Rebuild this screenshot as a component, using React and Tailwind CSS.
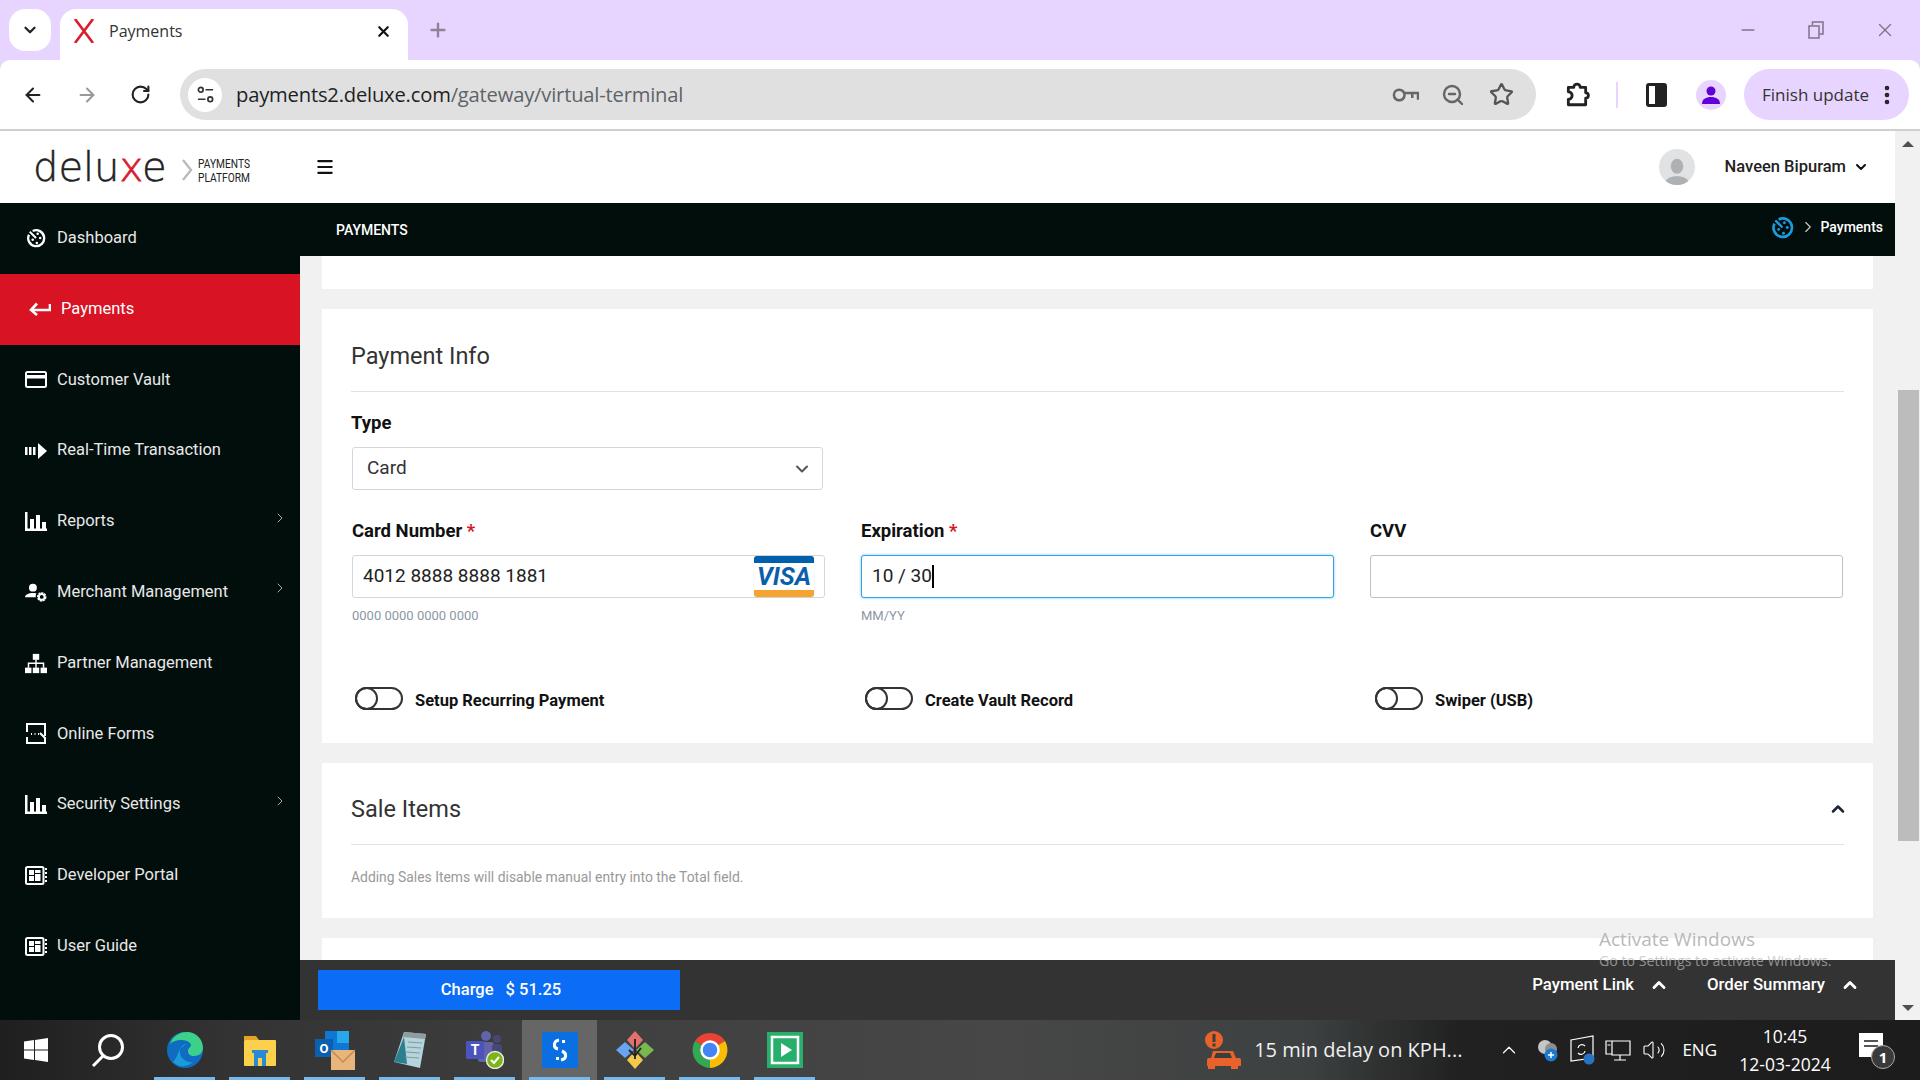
import React from 'react';
import { ArrowLeft, ArrowRight, RotateCw, ChevronDown, ChevronRight, ChevronUp, X, Plus, Minus, Star, ZoomOut, EllipsisVertical, Menu, Volume2 } from 'lucide-react';

function Gauge({ className }) {
    return (
        <svg viewBox="0 0 24 24" className={className} fill="none" stroke="currentColor">
            <path d="M8 3.6A9.6 9.6 0 1 1 3.6 8" strokeWidth="2.8" />
            <path d="M4.5 4.5L12 12" strokeWidth="2.4" />
            <circle cx="8" cy="14" r="1.5" fill="currentColor" stroke="none" />
            <circle cx="13" cy="18" r="1.5" fill="currentColor" stroke="none" />
            <circle cx="17" cy="12" r="1.5" fill="currentColor" stroke="none" />
            <circle cx="14" cy="7" r="1.5" fill="currentColor" stroke="none" />
        </svg>
    );
}

function ReturnArrow() {
    return (
        <svg viewBox="0 0 22 14" className="w-[22px] h-[14px]" fill="none" stroke="white">
            <path d="M21 2v6H3" strokeWidth="2.6" />
            <path d="M8 1.5L2 8l6 5" strokeWidth="2.6" />
        </svg>
    );
}

function CardIcon() {
    return (
        <svg viewBox="0 0 22 17" className="w-[22px] h-[17px]" fill="none">
            <rect x="1" y="1" width="20" height="15" rx="1.5" stroke="white" strokeWidth="2" />
            <rect x="1" y="4" width="20" height="3.5" fill="white" />
        </svg>
    );
}

function RealTime() {
    return (
        <svg viewBox="0 0 22 16" className="w-[22px] h-[16px]" fill="white">
            <rect x="0" y="4" width="2.5" height="8" />
            <rect x="4" y="4" width="2.5" height="8" />
            <rect x="8" y="4" width="2.5" height="8" />
            <path d="M13 0l9 8-9 8z" />
        </svg>
    );
}

function Bars() {
    return (
        <svg viewBox="0 0 22 19" className="w-[22px] h-[19px]" fill="white">
            <rect x="0" y="0" width="2.5" height="19" />
            <rect x="0" y="16.5" width="22" height="2.5" />
            <rect x="5" y="7" width="4" height="11" />
            <rect x="11" y="3" width="4" height="15" />
            <rect x="17" y="10" width="4" height="8" />
        </svg>
    );
}

function UserGear() {
    return (
        <svg viewBox="0 0 25 21" className="w-[25px] h-[21px]" fill="white">
            <circle cx="9" cy="5" r="4.5" />
            <path d="M0 16c0-3 4-5 9-5 1.5 0 3 .2 4 .5-1 1.5-1 3.5-.5 4.5z" />
            <circle cx="19" cy="15.5" r="4.3" fill="none" stroke="white" strokeWidth="2.2" strokeDasharray="2.4 .8" />
            <circle cx="19" cy="15.5" r="3.2" fill="none" stroke="white" strokeWidth="2" />
        </svg>
    );
}

function Sitemap() {
    return (
        <svg viewBox="0 0 24 21" className="w-[24px] h-[21px]" fill="white">
            <rect x="8.5" y="0" width="7" height="6.5" />
            <rect x="0" y="15" width="7" height="6" />
            <rect x="8.5" y="15" width="7" height="6" />
            <rect x="17" y="15" width="7" height="6" />
            <path d="M11.2 6h1.600v3.500H21V15h-1.600v-4h-6.600v4h-1.600v-4H4.600v4H3V9.500h8.200z" />
        </svg>
    );
}

function FormIcon() {
    return (
        <svg viewBox="0 0 20 21" className="w-[20px] h-[21px]" fill="none" stroke="white" strokeWidth="2">
            <path d="M1 9V1h18v12M1 14v6h18v-5L14 10" />
            <path d="M5 11h1M8.5 11h1M12 11h1" strokeWidth="2" />
        </svg>
    );
}

function GridBox() {
    return (
        <svg viewBox="0 0 22 19" className="w-[22px] h-[19px]" fill="none">
            <rect x="1" y="1" width="17.5" height="17" rx="1.5" stroke="white" strokeWidth="2" />
            <rect x="4" y="4" width="5" height="5" fill="white" />
            <rect x="10" y="4" width="5.5" height="3" fill="white" />
            <rect x="4" y="10" width="5" height="5" fill="white" />
            <rect x="10" y="8" width="5.5" height="7" fill="white" />
            <path d="M20 3h2M20 7h2M20 11h2M20 15h2" stroke="white" strokeWidth="2" />
        </svg>
    );
}

const menu = [
    { label: 'Dashboard', icon: <Gauge className="w-[20px] h-[20px] text-white" /> },
    { label: 'Payments', icon: <ReturnArrow />, active: true },
    { label: 'Customer Vault', icon: <CardIcon /> },
    { label: 'Real-Time Transaction', icon: <RealTime /> },
    { label: 'Reports', icon: <Bars />, more: true },
    { label: 'Merchant Management', icon: <UserGear />, more: true },
    { label: 'Partner Management', icon: <Sitemap /> },
    { label: 'Online Forms', icon: <FormIcon /> },
    { label: 'Security Settings', icon: <Bars />, more: true },
    { label: 'Developer Portal', icon: <GridBox /> },
    { label: 'User Guide', icon: <GridBox /> },
];

function TabBar() {
    return (
        <div className="h-[60px] bg-[#e8d5ff] flex pl-[9px] pt-[9px] shrink-0">
            <div className="w-[42px] h-[42px] rounded-[16px] bg-white flex items-center justify-center">
                <ChevronDown className="w-[18px] h-[18px] text-[#222]" strokeWidth={3} />
            </div>
            <div className="ml-[9px] w-[348px] h-[51px] bg-white rounded-t-[16px] flex items-center pl-[12px] pr-[16px] pb-[7px]">
                <svg viewBox="0 0 24 24" className="w-[24px] h-[24px] shrink-0" fill="none" stroke="#d81e2c" strokeWidth="2.6">
                    <path d="M3 0l18 24M21 0L3 24" />
                </svg>
                <span className="ml-[13px] text-[16px] text-[#333] font-['Open_Sans',sans-serif] flex-1">Payments</span>
                <X className="w-[17px] h-[17px] text-[#111]" strokeWidth={3} />
            </div>
            <div className="ml-[19px] h-[42px] flex items-center">
                <Plus className="w-[22px] h-[22px] text-[#8f8399]" strokeWidth={2.6} />
            </div>
            <div className="flex-1" />
            <div className="h-[42px] flex items-center text-[#7f7389]">
                <Minus className="w-[20px] h-[20px]" strokeWidth={1.8} />
                <svg viewBox="0 0 16 18" className="ml-[50px] w-[16px] h-[18px]" fill="none" stroke="currentColor" strokeWidth="1.5">
                    <rect x="1" y="5" width="10" height="12" />
                    <path d="M4.5 4V1H15v12h-3.5" />
                </svg>
                <X className="ml-[50px] mr-[24px] w-[22px] h-[22px]" strokeWidth={1.5} />
            </div>
        </div>
    );
}

function ToolBar() {
    return (
        <div className="bg-[#e8d5ff] shrink-0">
            <div className="h-[69px] bg-white rounded-t-[10px] flex items-center pl-[22px] font-['Open_Sans',sans-serif]">
                <ArrowLeft className="w-[22px] h-[22px] text-[#222]" strokeWidth={2.2} />
                <ArrowRight className="ml-[32px] w-[22px] h-[22px] text-[#999]" strokeWidth={2.2} />
                <RotateCw className="ml-[32px] w-[21px] h-[21px] text-[#222]" strokeWidth={2.4} />
                <div className="ml-[29px] w-[1356px] h-[51px] rounded-full bg-[#e0e0e0] flex items-center pl-[8px] pr-[22px]">
                    <div className="w-[34px] h-[34px] rounded-full bg-white flex items-center justify-center">
                        <svg viewBox="0 0 20 20" className="w-[19px] h-[19px]" fill="none" stroke="#333" strokeWidth="1.8">
                            <circle cx="5" cy="5" r="2.5" />
                            <path d="M10 5h8M2 15h8" />
                            <circle cx="15" cy="15" r="2.5" />
                        </svg>
                    </div>
                    <div className="ml-[14px] flex-1 text-[20.2px] tracking-[-0.2px] text-[#1f1f1f]">
                        payments2.deluxe.com<span className="text-[#5f6368]">/gateway/virtual-terminal</span>
                    </div>
                    <svg viewBox="0 0 28 18" className="w-[27px] h-[18px]" fill="none" stroke="#666" strokeWidth="2.6">
                        <circle cx="7.5" cy="9" r="5.5" />
                        <path d="M13 7h14v7M21 7v5" />
                    </svg>
                    <ZoomOut className="ml-[22px] w-[24px] h-[24px] text-[#666]" strokeWidth={2.4} />
                    <Star className="ml-[24px] w-[25px] h-[25px] text-[#555]" strokeWidth={2.2} />
                </div>
                <svg viewBox="0 0 24 24" className="ml-[28px] w-[26px] h-[26px]" fill="none" stroke="#222" strokeWidth="2.6">
                    <path d="M4 5h5a3 3 0 0 1 6 0h5v5a2.5 2.5 0 0 1 0 5v6H4v-5a3.5 3.5 0 0 0 0-7z" strokeLinejoin="round" />
                </svg>
                <div className="ml-[26px] w-[2px] h-[26px] bg-[#e8d5ff]" />
                <div className="ml-[28px] w-[21px] h-[24px] rounded-[3px] border-[3px] border-[#222] flex justify-end">
                    <div className="w-[9px] bg-[#222]" />
                </div>
                <div className="ml-[29px] w-[30px] h-[30px] rounded-full bg-[#e8d5ff] flex items-center justify-center">
                    <svg viewBox="0 0 20 20" className="w-[20px] h-[20px]" fill="#6200d8">
                        <circle cx="10" cy="6" r="4.5" />
                        <path d="M1 19c0-5 4-7 9-7s9 2 9 7z" />
                    </svg>
                </div>
                <div className="ml-[18px] w-[165px] h-[51px] rounded-full bg-[#e8d5ff] flex items-center pl-[18px]">
                    <span className="text-[17px] text-[#333] whitespace-nowrap">Finish update</span>
                    <EllipsisVertical className="ml-[6px] w-[24px] h-[24px] text-[#222]" strokeWidth={2.6} />
                </div>
            </div>
            <div className="h-[2px] bg-[#cfcfcf]" />
        </div>
    );
}

function Logo() {
    return (
        <div className="flex items-center">
            <div className="w-[149px] text-[40px] leading-none text-[#222] font-['DejaVu_Sans',sans-serif] font-extralight [-webkit-text-stroke:0.5px_#222]">
                delu<span className="text-[#d81e2c] [-webkit-text-stroke:0.8px_#d81e2c]">x</span>e
            </div>
            <svg viewBox="0 0 11 22" className="w-[11px] h-[22px] mt-[6px]" fill="none" stroke="#bbb" strokeWidth="2.4">
                <path d="M1 1l8 10-8 10" />
            </svg>
            <div className="ml-[5px] mt-[7px] w-[54px] scale-x-[0.85] origin-left text-[12px] leading-[14px] text-[#222] whitespace-nowrap">PAYMENTS<br />PLATFORM</div>
        </div>
    );
}

function Header() {
    return (
        <div className="h-[72px] bg-white flex items-center pl-[33px] pr-[26px] shrink-0">
            <Logo />
            <Menu className="ml-[63px] w-[20px] h-[20px] text-[#111]" strokeWidth={2.6} />
            <div className="flex-1" />
            <div className="w-[36px] h-[36px] rounded-full bg-[#e0e2e4] flex items-end justify-center overflow-hidden">
                <svg viewBox="0 0 24 24" className="w-[30px] h-[30px]" fill="#adb1b4">
                    <ellipse cx="12" cy="9" rx="5" ry="6" />
                    <path d="M2 24c0-5 5-7 10-7s10 2 10 7z" />
                </svg>
            </div>
            <span className="ml-[30px] text-[16.5px] font-medium text-[#222]">Naveen Bipuram</span>
            <ChevronDown className="ml-[7px] w-[16px] h-[16px] text-[#111]" strokeWidth={3} />
        </div>
    );
}

function Sidebar() {
    return (
        <div className="w-[300px] shrink-0 bg-[#020e0c] flex flex-col">
            {menu.map(item => (
                <div key={item.label} className={`h-[70.8px] shrink-0 flex items-center text-[16.5px] ${item.active ? 'bg-[#d81323] text-white pl-[29px]' : 'text-[#e8e8e8] pl-[25px]'}`}>
                    <div className="w-[22px] flex justify-center">{item.icon}</div>
                    <span className="ml-[10px] flex-1">{item.label}</span>
                    {item.more && <ChevronRight className="mr-[12px] -mt-[8px] w-[16px] h-[22px] text-[#aaa]" strokeWidth={1.5} />}
                </div>
            ))}
        </div>
    );
}

function Field({ label, required, hint, children, className }) {
    return (
        <div>
            <div className="text-[18.5px] leading-[24px] font-bold text-[#111]">
                {label}{required && <span className="text-[#d81323]"> *</span>}
            </div>
            <div className={`mt-[12px] h-[43px] rounded-[3px] border flex items-center text-[19px] text-[#222] bg-white ${className}`}>
                {children}
            </div>
            <div className="mt-[10px] h-[16px] text-[13px] leading-[16px] text-[#8b98a5]">{hint}</div>
        </div>
    );
}

function Toggle({ label, className }) {
    return (
        <div className={`flex items-center ${className}`}>
            <div className="w-[48px] h-[23px] rounded-full border-2 border-[#333]">
                <div className="-m-[2px] w-[23px] h-[23px] rounded-full border-2 border-[#333]" />
            </div>
            <span className="ml-[12px] mt-[6px] text-[16.5px] font-bold text-[#111]">{label}</span>
        </div>
    );
}

function PaymentInfo() {
    return (
        <div className="mt-[20px] bg-white h-[434px] px-[29px] pt-[30px] shrink-0">
            <div className="text-[23.5px] leading-[34px] text-[#333]">Payment Info</div>
            <div className="mt-[18px] h-px bg-[#e2e2e2]" />
            <div className="mt-[19px] text-[18.5px] leading-[24px] font-bold text-[#111]">Type</div>
            <div className="mt-[12px] w-[471px] h-[43px] ml-px rounded-[3px] border border-[#d6d6d6] flex items-center pl-[14px] pr-[10px] text-[19px] text-[#333]">
                <span className="flex-1">Card</span>
                <ChevronDown className="w-[20px] h-[20px] text-[#555]" strokeWidth={2.4} />
            </div>
            <div className="mt-[29px] grid grid-cols-3 gap-x-[36px] pl-px pr-[1px]">
                <Field label="Card Number" required hint="0000 0000 0000 0000" className="border-[#d6d6d6] pl-[10px] pr-[10px]">
                    <span className="flex-1">4012 8888 8888 1881</span>
                    <div className="w-[60px] h-[41px] flex flex-col rounded-[3px] overflow-hidden shadow-[0_0_1px_#bbb]">
                        <div className="h-[7px] bg-[#0060ac]" />
                        <div className="flex-1 flex items-center justify-center text-[25px] leading-none font-bold italic text-[#0a5fab]">VISA</div>
                        <div className="h-[7px] bg-[#f5a431]" />
                    </div>
                </Field>
                <Field label="Expiration" required hint="MM/YY" className="border-[#35a3e3] shadow-[0_0_3px_#7cc6f0] pl-[10px]">
                    <span>10 / 30</span>
                    <span className="w-[2px] h-[23px] bg-black" />
                </Field>
                <Field label="CVV" className="border-[#bfbfbf]" />
            </div>
            <div className="mt-[59px] grid grid-cols-3 gap-x-[36px] pl-px pr-px">
                <Toggle label="Setup Recurring Payment" className="pl-[3px]" />
                <Toggle label="Create Vault Record" className="pl-[4px]" />
                <Toggle label="Swiper (USB)" className="pl-[5px]" />
            </div>
        </div>
    );
}

function SaleItems() {
    return (
        <div className="mt-[20px] bg-white h-[155px] px-[29px] pt-[29px] shrink-0">
            <div className="flex items-center">
                <span className="flex-1 text-[23.5px] leading-[34px] text-[#333]">Sale Items</span>
                <ChevronUp className="-mr-[4px] w-[20px] h-[20px] text-[#1b2530]" strokeWidth={3} />
            </div>
            <div className="mt-[18px] h-px bg-[#e2e2e2]" />
            <div className="mt-[23px] text-[13.9px] leading-[18px] text-[#999]">Adding Sales Items will disable manual entry into the Total field.</div>
        </div>
    );
}

function BottomBar() {
    return (
        <div className="h-[60px] bg-[#333] flex items-start pt-[10px] pl-[18px] shrink-0">
            <div className="w-[362px] h-[40px] pl-[4px] bg-[#0b6df5] flex items-center justify-center text-[16.5px] font-medium text-white">
                Charge <span className="ml-[12px]">$ 51.25</span>
            </div>
            <div className="flex-1" />
            <div className="h-[30px] flex items-center text-[16.8px] font-medium text-white mr-[35px]">
                <span>Payment Link</span>
                <ChevronUp className="ml-[15px] w-[20px] h-[20px]" strokeWidth={3.4} />
                <span className="ml-[38px]">Order Summary</span>
                <ChevronUp className="ml-[15px] w-[20px] h-[20px]" strokeWidth={3.4} />
            </div>
        </div>
    );
}

function Scrollbar() {
    return (
        <div className="w-[25px] shrink-0 bg-[#f1f1f1] flex flex-col items-center pt-[10px] pb-[9px] pl-px">
            <div className="w-0 h-0 border-x-[6px] border-x-transparent border-b-[6px] border-b-[#505050]" />
            <div className="mt-[243px] w-[21px] h-[451px] bg-[#bcbcbc]" />
            <div className="flex-1" />
            <div className="w-0 h-0 border-x-[6px] border-x-transparent border-t-[6px] border-t-[#505050]" />
        </div>
    );
}

function TrayIcons() {
    return (
        <div className="flex items-center text-white">
            <ChevronUp className="w-[22px] h-[22px]" strokeWidth={1.3} />
            <svg viewBox="0 0 24 24" className="ml-[16px] w-[24px] h-[24px]">
                <circle cx="9" cy="9" r="7" fill="#c6c6c6" />
                <circle cx="15" cy="11" r="6" fill="#8e8e8e" />
                <circle cx="15" cy="17" r="6.5" fill="#1a7ad4" />
                <path d="M12 17h6M15 14v6" stroke="white" strokeWidth="1.5" />
            </svg>
            <svg viewBox="0 0 26 30" className="ml-[9px] w-[26px] h-[30px]" fill="none" stroke="white" strokeWidth="1.2">
                <path d="M2 5l22-4v22l-22 3z" />
                <path d="M9 13a4 4 0 0 1 7-2M16 16a4 4 0 0 1-7 2" />
                <circle cx="20" cy="24" r="5.5" fill="#2a72c4" stroke="none" />
            </svg>
            <svg viewBox="0 0 26 26" className="ml-[10px] w-[26px] h-[26px]" fill="none" stroke="white" strokeWidth="1.2">
                <path d="M1 4h6v13H1zM7 4h18v14H7zM15 18v5M9 23h12M2.5 8h3" />
            </svg>
            <Volume2 className="ml-[11px] w-[24px] h-[24px]" strokeWidth={1.1} />
        </div>
    );
}

const appIcons = [
    <svg key="edge" viewBox="0 0 36 36" className="w-[36px] h-[36px]">
        <circle cx="18" cy="18" r="18" fill="#0f6cc0" />
        <path d="M3 12C6 3 14 0 20 0c9 0 16 7 16 16 0 5-4 8-9 8-4 0-6-2-6-5 0-3 3-4 3-6S20 8 15 8C9 8 5 10 3 12z" fill="#3dd08a" />
        <path d="M20 12c-5 0-7 4-7 8 0 6 6 11 13 10-5 5-14 6-20 0C12 24 10 16 20 12z" fill="#1d9bd8" />
    </svg>,
    <svg key="folder" viewBox="0 0 32 36" className="w-[32px] h-[36px]">
        <path d="M0 4h12l3 4H0z" fill="#e0a526" />
        <rect x="0" y="8" width="32" height="26" rx="1" fill="#fbd04c" />
        <path d="M10 34V21h12v13h-4v-8h-4v8z" fill="#2a8ad4" />
        <rect x="8" y="18" width="16" height="3" fill="#2a8ad4" />
    </svg>,
    <svg key="outlook" viewBox="0 0 40 40" className="w-[40px] h-[40px]">
        <rect x="10" y="1" width="24" height="24" fill="#0f78d4" />
        <rect x="22" y="1" width="12" height="12" fill="#28a8ea" />
        <rect x="0" y="9" width="18" height="18" fill="#0a5fb0" />
        <text x="9" y="23" fontSize="13" fontWeight="bold" fill="white" textAnchor="middle" fontFamily="Roboto">O</text>
        <rect x="16" y="20" width="24" height="20" fill="#e8b57c" />
        <path d="M16 20l12 12 12-12" fill="none" stroke="#c48a50" strokeWidth="1.5" />
    </svg>,
    <svg key="notepad" viewBox="0 0 32 36" className="w-[32px] h-[36px]">
        <path d="M10 0l22 2-6 34L0 30z" fill="#b5d4dc" />
        <path d="M10 0l22 2-1 5L9 5z" fill="#8d9da0" />
        <path d="M0 30L10 5l3 27z" fill="#2c7f8f" />
        <path d="M14 10l14 1M13 15l14 1M12 20l14 1M11 25l14 1" stroke="#7d9aa3" strokeWidth="1" />
    </svg>,
    <svg key="teams" viewBox="0 0 38 38" className="w-[38px] h-[38px]">
        <circle cx="20" cy="5" r="5" fill="#6264a7" />
        <circle cx="31" cy="8" r="4" fill="#464775" />
        <rect x="12" y="11" width="16" height="20" rx="3" fill="#6264a7" />
        <rect x="26" y="13" width="10" height="14" rx="3" fill="#464775" />
        <rect x="0" y="10" width="18" height="18" rx="1" fill="#4b53bc" />
        <text x="9" y="24" fontSize="14" fontWeight="bold" fill="white" textAnchor="middle" fontFamily="Roboto">T</text>
        <circle cx="29" cy="29" r="8.5" fill="#7cb518" stroke="#e8e8e8" strokeWidth="1.5" />
        <path d="M25 29l3 3 5-6" fill="none" stroke="white" strokeWidth="2" />
    </svg>,
    <svg key="stripe" viewBox="0 0 36 36" className="w-[36px] h-[36px]">
        <rect width="36" height="36" fill="#0a6fe0" />
        <path d="M17 8c-6 1-6 8-1 9M20 19c5 2 5 8-1 9" fill="none" stroke="white" strokeWidth="3" />
        <rect x="20" y="8" width="3" height="3" fill="white" />
        <rect x="14" y="25" width="3" height="3" fill="white" />
    </svg>,
    <svg key="git" viewBox="0 0 38 38" className="w-[38px] h-[38px]">
        <path d="M19 0l8 9-8 9-8-9z" fill="#e5716c" />
        <path d="M0 19l9-8 9 8-9 8z" fill="#6aa3f0" />
        <path d="M38 19l-9-8-9 8 9 8z" fill="#78b84e" />
        <path d="M19 38l-8-9 8-9 8 9z" fill="#f4c84c" />
        <path d="M19 8v20M13 19l6 6 6-8" stroke="#222" strokeWidth="1.8" fill="none" />
    </svg>,
    <svg key="chrome" viewBox="0 0 36 36" className="w-[36px] h-[36px]">
        <path d="M18 18L3 9A18 18 0 0 1 33 9z" fill="#ea4335" />
        <path d="M18 18L3 9a18 18 0 0 0 15 27z" fill="#34a853" />
        <path d="M18 18l15-9a18 18 0 0 1-15 27z" fill="#fbbc05" />
        <circle cx="18" cy="18" r="8.5" fill="#4285f4" stroke="white" strokeWidth="2.5" />
    </svg>,
    <svg key="player" viewBox="0 0 36 36" className="w-[36px] h-[36px]">
        <rect width="36" height="36" fill="#27b06b" />
        <rect x="5" y="5" width="26" height="26" fill="none" stroke="white" strokeWidth="2.5" />
        <path d="M14 11l11 7-11 7z" fill="white" />
    </svg>,
];

function Taskbar() {
    return (
        <div className="h-[60px] shrink-0 flex text-white bg-[linear-gradient(90deg,#1f1f1f_0%,#333_12%,#3f3f3f_30%,#474747_52%,#3d4141_68%,#212121_76%,#1c1c1c_100%)] font-['Open_Sans',sans-serif]">
            <div className="w-[71px] flex items-center justify-center">
                <svg viewBox="0 0 24 24" className="w-[24px] h-[24px]" fill="white">
                    <path d="M0 3.5l10-1.400V11.500H0zM11 2l13-2v11.500H11zM0 12.500h10v9.400L0 20.500zM11 12.500h13V24l-13-2z" />
                </svg>
            </div>
            <div className="w-[74px] flex items-center justify-center">
                <svg viewBox="0 0 34 34" className="w-[34px] h-[34px]" fill="none" stroke="white" strokeWidth="3">
                    <circle cx="20" cy="14" r="11.5" />
                    <path d="M12 23L2 33" />
                </svg>
            </div>
            <div className="ml-[2px] flex">
                {appIcons.map((icon, i) => (
                    <div key={i} className={`relative w-[75px] flex items-center justify-center ${i === 5 ? 'bg-[#666]' : ''}`}>
                        {icon}
                        <div className="absolute left-[7px] right-[7px] bottom-0 h-[3px] bg-[#76b9ed]" />
                    </div>
                ))}
            </div>
            <div className="flex-1" />
            <div className="flex items-center">
                <svg viewBox="0 0 36 38" className="w-[36px] h-[38px]" fill="#e8622a">
                    <circle cx="9" cy="9" r="9" />
                    <rect x="7.5" y="3" width="3" height="8" fill="#3a3d3d" />
                    <rect x="7.5" y="12.5" width="3" height="3" fill="#3a3d3d" />
                    <path d="M8 20h20l3 7h3a2 2 0 0 1 2 2v6H2v-6a2 2 0 0 1 2-2h2z" />
                    <rect x="3" y="33" width="7" height="5" />
                    <rect x="26" y="33" width="7" height="5" />
                    <path d="M11 22h14l2 5H9z" fill="#3a3d3d" />
                </svg>
                <span className="ml-[13px] text-[20px] text-[#f0f0f0] whitespace-nowrap">15 min delay on KPH...</span>
                <div className="ml-[36px]"><TrayIcons /></div>
                <span className="ml-[16px] text-[17px]">ENG</span>
                <div className="ml-[12px] w-[112px] text-center text-[17.5px] leading-[28px]">
                    <div>10:45</div>
                    <div>12-03-2024</div>
                </div>
                <div className="relative ml-[18px] mr-[37px] w-[24px] h-[24px] -mt-[10px] bg-white">
                    <div className="mx-[5px] mt-[7px] h-[2px] bg-[#555]" />
                    <div className="mx-[5px] mt-[3px] h-[2px] bg-[#555]" />
                    <div className="absolute -right-[12px] top-[12px] w-[24px] h-[24px] rounded-full bg-[#3a3a3a] border border-[#aaa] flex items-center justify-center text-[15px] font-bold">1</div>
                </div>
            </div>
        </div>
    );
}

export default function App() {
    return (
        <div className="relative w-[1920px] h-[1080px] overflow-hidden flex flex-col bg-white font-['Roboto',sans-serif]">
            <TabBar />
            <ToolBar />
            <div className="flex-1 min-h-0 flex">
                <div className="flex-1 min-w-0 flex flex-col">
                    <Header />
                    <div className="flex-1 min-h-0 flex">
                        <Sidebar />
                        <div className="flex-1 min-w-0 flex flex-col">
                            <div className="h-[53px] bg-[#020e0c] flex items-center pl-[36px] pr-[12px] text-white shrink-0">
                                <span className="flex-1 mt-[1px] text-[14px] font-medium">PAYMENTS</span>
                                <Gauge className="w-[23px] h-[23px] text-[#1a9be0] -mt-[5px]" />
                                <ChevronRight className="ml-[5px] w-[18px] h-[18px] text-[#ccc] -mt-[5px]" strokeWidth={1.5} />
                                <span className="ml-[3px] text-[14px] font-medium -mt-[5px]">Payments</span>
                            </div>
                            <div className="flex-1 min-h-0 bg-[#f1f1f1] px-[22px] flex flex-col overflow-hidden">
                                <div className="h-[33px] bg-white shrink-0" />
                                <PaymentInfo />
                                <SaleItems />
                                <div className="mt-[20px] flex-1 bg-white" />
                            </div>
                            <BottomBar />
                        </div>
                    </div>
                </div>
                <Scrollbar />
            </div>
            <Taskbar />
            <div className="absolute left-[1599px] top-[926px] text-[#b9b9b9] font-['Open_Sans',sans-serif] pointer-events-none">
                <div className="text-[19px] leading-[26px]">Activate Windows</div>
                <div className="text-[14.2px] leading-[20px] mt-[-1px] opacity-70">Go to Settings to activate Windows.</div>
            </div>
        </div>
    );
}
